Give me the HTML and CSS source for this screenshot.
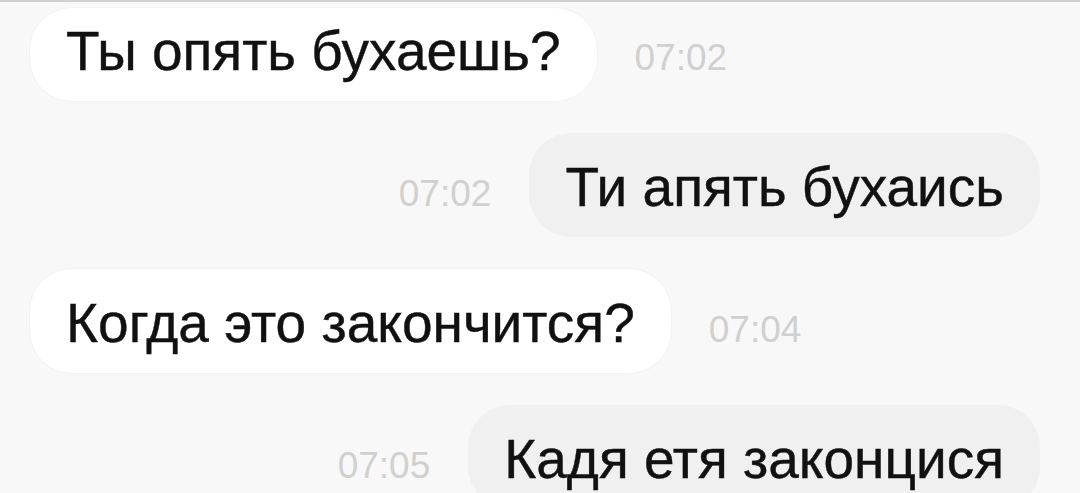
FILE: index.html
```html
<!DOCTYPE html>
<html lang="ru">
<head>
    <meta charset="UTF-8">
    <meta name="viewport" content="width=device-width, initial-scale=1.0">
    <title>Чат</title>
    <link rel="stylesheet" href="styles.css">
</head>
<body>
    <div class="chat">
        <div class="msg in first">
            <div class="bubble">Ты опять бухаешь?</div>
            <span class="time">07:02</span>
        </div>

        <div class="msg out">
            <span class="time">07:02</span>
            <div class="bubble">Ти апять бухаись</div>
        </div>

        <div class="msg in">
            <div class="bubble">Когда это закончится?</div>
            <span class="time">07:04</span>
        </div>

        <div class="msg out">
            <span class="time">07:05</span>
            <div class="bubble">Кадя етя законцися</div>
        </div>
    </div>
</body>
</html>
```

FILE: styles.css
```css
body {
    margin: 0;
    padding: 0;
    background-color: #f8f8f8;
    font-family: "Liberation Sans", Arial, sans-serif;
    color: #111111;
    height: 100vh;
    overflow: hidden;
}

.chat {
    border-top: 2px solid #cfcfcf;
    padding: 6px 40px 0 30px;
    display: flex;
    flex-direction: column;
    gap: 32px;
}

.msg {
    display: flex;
    align-items: baseline;
    gap: 38px;
}

.msg.out {
    justify-content: flex-end;
}

.bubble {
    font-size: 55px;
    line-height: 63px;
    padding: 23px 36px 18px;
    border-radius: 42px;
    white-space: nowrap;
    -webkit-text-stroke: 0.4px #111111;
}

.msg.first .bubble {
    padding-top: 12px;
}

.msg.in .bubble {
    background-color: #ffffff;
    box-shadow: 0 0 0 1px #f2f2f2;
}

.msg.out .bubble {
    background-color: #f0f0f0;
}

.time {
    font-size: 37px;
    color: #d0d0d0;
}
```
